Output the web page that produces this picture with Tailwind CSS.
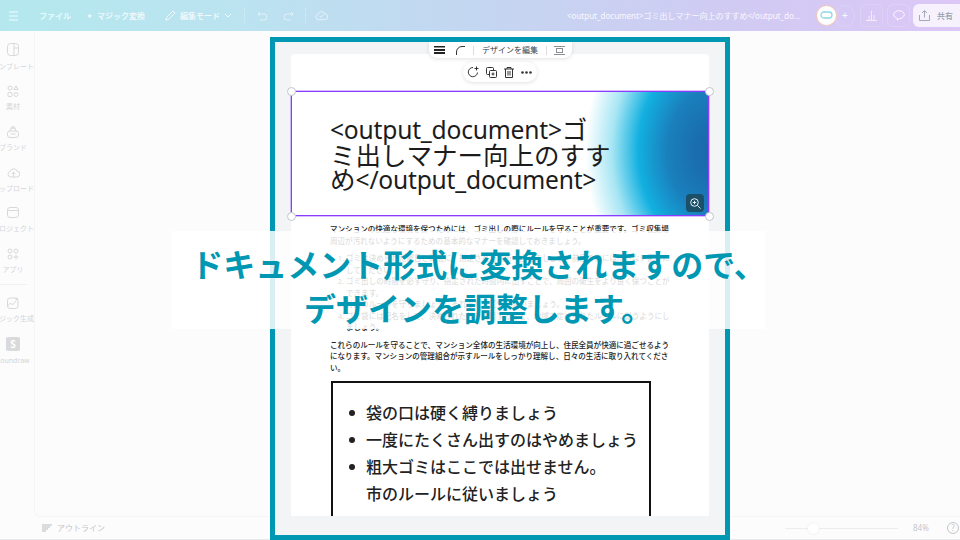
<!DOCTYPE html>
<html lang="ja"><head><meta charset="utf-8">
<script src="https://cdn.jsdelivr.net/npm/@tailwindcss/browser@4"></script>
</head>
<body class="w-[960px] h-[540px] overflow-hidden relative bg-[#fcfcfd] font-['Noto_Sans','Noto_Sans_CJK_JP',sans-serif]">
<div class="w-[960px] h-[540px] flex flex-col">
  <!-- top bar -->
  <header class="h-[31px] shrink-0 flex items-center whitespace-nowrap bg-[linear-gradient(90deg,#b4e8ee_0%,#bbe3f0_25%,#c4d6f1_50%,#d0cbf3_75%,#dcc7f6_100%)] text-white/85 text-[8px] font-medium">
    <svg class="ml-[9px] shrink-0 w-[9px] h-[10px]" viewBox="0 0 9 10" stroke="currentColor" stroke-width="1.1"><path d="M0 1h9M0 5h9M0 9h9"/></svg>
    <span class="ml-[21px] w-[32px]">ファイル</span>
    <span class="ml-[16px] w-[5px] text-[5px]">★</span>
    <span class="ml-[5px] w-[48px]">マジック変換</span>
    <svg class="ml-[20px] shrink-0 w-[11px] h-[11px]" viewBox="0 0 12 12" fill="none" stroke="currentColor" stroke-width="1"><path d="M1 11l.7-3L8.800 1l2.200 2.200L4 10.300z"/></svg>
    <span class="ml-[4px] w-[40px]">編集モード</span>
    <svg class="ml-[4px] shrink-0 w-[8px] h-[5px]" viewBox="0 0 8 5" fill="none" stroke="currentColor"><path d="M1 1l3 3 3-3"/></svg>
    <span class="ml-[12px] h-[16px] border-l border-dotted border-white/40"></span>
    <svg class="ml-[12px] shrink-0 w-[11px] h-[10px] text-white/50" viewBox="0 0 11 10" fill="none" stroke="currentColor"><path d="M3 1L1 3l2 2M1 3h6a3 3 0 010 6H3"/></svg>
    <svg class="ml-[15px] shrink-0 w-[11px] h-[10px] text-white/50" viewBox="0 0 11 10" fill="none" stroke="currentColor"><path d="M8 1l2 2-2 2M10 3H4a3 3 0 000 6h4"/></svg>
    <span class="ml-[11px] h-[16px] border-l border-dotted border-white/40"></span>
    <svg class="ml-[9px] shrink-0 w-[13px] h-[11px] text-white/60" viewBox="0 0 14 11" fill="none" stroke="currentColor"><path d="M3.500 10a2.800 2.800 0 01-.4-5.500A4 4 0 0110.800 4 3 3 0 0110.500 10z"/><path d="M5 6l1.500 1.500L9 4.500"/></svg>
    <span class="ml-auto w-[233px] font-normal text-white/85 overflow-hidden">&lt;output_document&gt;ゴミ出しマナー向上のすすめ&lt;/output_do...</span>
    <span class="relative z-10 ml-[16px] w-[21px] h-[21px] shrink-0 rounded-full bg-white border border-[#f5c5b5] flex items-center justify-center">
      <svg class="w-[13px] h-[9px]" viewBox="0 0 13 9" fill="none" stroke="#8fd6e6" stroke-width="1.300"><rect x="1" y="1" width="11" height="6" rx="3"/></svg>
    </span>
    <span class="-ml-[2px] w-[20px] h-[22px] shrink-0 rounded-full border border-white/15 flex items-center justify-center text-[11px] font-normal">+</span>
    <span class="ml-[5px] w-[23px] h-[23px] shrink-0 rounded-md border border-white/15 flex items-center justify-center">
      <svg class="w-[11px] h-[11px]" viewBox="0 0 11 11" fill="none" stroke="currentColor" stroke-width=".8"><path d="M0 10.500h11M3 10V6M5.500 10V1M8 10V5"/></svg>
    </span>
    <span class="ml-[4px] w-[23px] h-[23px] shrink-0 rounded-md border border-white/15 flex items-center justify-center">
      <svg class="w-[12px] h-[11px]" viewBox="0 0 12 11" fill="none" stroke="currentColor"><path d="M6 .7c3 0 5.300 1.800 5.300 4S9 8.700 6 8.700l-1.500 1.600V8.500C2.400 8 .7 6.600.7 4.700c0-2.200 2.300-4 5.300-4z"/></svg>
    </span>
    <span class="ml-[3px] w-[47px] h-[23px] shrink-0 rounded-l-md bg-white/75 flex items-center text-[#9aa0a8]">
      <svg class="ml-[6px] w-[11px] h-[11px]" viewBox="0 0 11 11" fill="none" stroke="currentColor" stroke-width=".9"><path d="M.5 5v5.500h10V5M5.500 7.500V.8M3 3l2.500-2.500L8 3"/></svg>
      <span class="ml-[7px]">共有</span>
    </span>
  </header>

  <!-- middle -->
  <div class="flex-1 flex min-h-0">
    <nav class="w-[26px] shrink-0 flex flex-col items-center pt-[12px] text-[7px] leading-[10px] text-[#d3d5d8] whitespace-nowrap">
      <svg class="w-[12px] h-[13px] shrink-0" viewBox="0 0 12 13" fill="none" stroke="#d6d8da"><rect x=".5" y=".5" width="11" height="12" rx="3"/><path d="M7 .5v12M7 5h4.500"/></svg>
      <span class="mt-[6px]">テンプレート</span>
      <svg class="mt-[13px] w-[12px] h-[12px] shrink-0" viewBox="0 0 12 12" fill="none" stroke="#d6d8da"><circle cx="3" cy="3" r="2"/><path d="M9 .8l2.200 3.800H6.800z"/><rect x="1" y="7.500" width="4" height="4" rx="1"/><circle cx="9" cy="9.500" r="2"/></svg>
      <span class="mt-[5px]">素材</span>
      <svg class="mt-[14px] w-[12px] h-[12px] shrink-0" viewBox="0 0 12 12" fill="none" stroke="#d6d8da"><rect x=".5" y="5" width="11" height="6.500" rx="2.500"/><path d="M3 5a3 3 0 016 0M3.500 8h5M4 2.500a2 2 0 014 0"/></svg>
      <span class="mt-[5px]">ブランド</span>
      <svg class="mt-[14px] w-[13px] h-[11px] shrink-0" viewBox="0 0 13 11" fill="none" stroke="#d6d8da"><path d="M3.500 10a2.800 2.800 0 01-.4-5.500A3.700 3.700 0 0110 4a3 3 0 01-.5 6H3.500zM6.500 10V5.500M4.700 7l1.800-1.800L8.300 7"/></svg>
      <span class="mt-[6px]">アップロード</span>
      <svg class="mt-[13px] w-[12px] h-[11px] shrink-0" viewBox="0 0 12 11" fill="none" stroke="#d6d8da"><rect x=".5" y=".5" width="11" height="10" rx="2.500"/><path d="M.5 3.500h11"/></svg>
      <span class="mt-[6px]">プロジェクト</span>
      <svg class="mt-[14px] w-[12px] h-[12px] shrink-0" viewBox="0 0 12 12" fill="none" stroke="#d6d8da"><circle cx="3" cy="3" r="2"/><circle cx="9" cy="3" r="2"/><circle cx="3" cy="9" r="2"/><path d="M9 6.500v5M6.500 9h5"/></svg>
      <span class="mt-[5px]">アプリ</span>
      <span class="mt-[9px] w-[28px] border-t border-[#f1f2f3]"></span>
      <svg class="mt-[12px] w-[12px] h-[12px] shrink-0" viewBox="0 0 12 12" fill="none" stroke="#d6d8da"><rect x=".5" y="1" width="10.500" height="10.500" rx="2.500"/><path d="M.5 9l3-3 2 2 3.500-4"/><circle cx="9.500" cy="2" r=".8" fill="#d6d8da"/></svg>
      <span class="mt-[5px]">マジック生成</span>
      <span class="mt-[13px] w-[14px] h-[14px] shrink-0 rounded-[2px] bg-[#d9dadb] text-white text-[10px] leading-[14px] font-bold text-center">S</span>
      <span class="mt-[5px]">Soundraw</span>
    </nav>
    <main class="flex-1 ml-[8px] rounded-bl-md border-l border-b border-[#f5f5f6]"></main>
  </div>

  <!-- bottom bar -->
  <footer class="h-[23px] shrink-0 flex items-center border-b border-[#e9eaeb] text-[#c4c6ca] text-[8px] whitespace-nowrap">
    <svg class="ml-[42px] shrink-0 w-[10px] h-[8px]" viewBox="0 0 10 8" stroke="#b9bbbf"><path d="M0 1h10M0 3h8M0 5h6M0 7h4"/></svg>
    <span class="ml-[5px] w-[47px]">アウトライン</span>
    <span class="ml-[681px] w-[113px] h-px bg-[#eceded] relative">
      <span class="absolute left-[23px] -top-[5px] w-[11px] h-[11px] rounded-full bg-white shadow-[0_0_2px_#e3e4e5]"></span>
    </span>
    <span class="ml-[15px] w-[16px]">84%</span>
    <span class="ml-[18px] w-[12px] h-[12px] rounded-full border border-[#c4c6ca] leading-[10px] text-center">?</span>
  </footer>
</div>

<!-- teal highlighted canvas -->
<section class="absolute left-[270px] top-[37px] w-[460px] h-[503px] border-[5px] border-[#0097b2] bg-[#f3f4f6] overflow-hidden">
  <div class="absolute left-[16px] top-[12px] w-[418px] h-[462px] rounded-t bg-white overflow-hidden">
    <div class="mt-[37px] h-[125px] bg-[radial-gradient(ellipse_132px_170px_at_102%_48%,#1a66a8_0%,#1a6fb0_18%,#1a80bd_38%,#12b0e0_60%,#a8e6f4_80%,#ffffff_100%)] pl-[39px] pt-[26px] text-[25.5px] leading-[24.600px] text-[#1c1c1c] w-[418px] whitespace-nowrap">
      <p><span class="text-[24.600px] tracking-[-0.2px]">&lt;output_document&gt;</span>ゴ<br>ミ出しマナー向上のすす<br>め<span class="text-[24.600px] tracking-[-0.2px]">&lt;/output_document&gt;</span></p>
    </div>
    <div class="pl-[39px] pr-[37px] pt-[8px] text-[7.55px] leading-[11.5px] text-[#222] font-medium">
      <p>マンションの快適な環境を保つためには、ゴミ出しの際にルールを守ることが重要です。ゴミ収集場周辺が汚れないようにするための基本的なマナーを確認しておきましょう。</p>
      <ol class="mt-[6px] pl-[16px] list-decimal">
        <li>ゴミは決められた曜日と時間に、指定された場所へ出しましょう。前日の夜には出さないようにしてください。</li>
        <li>ゴミ出しの時間を必ず守り、指定された時間内に出すことで、周囲の衛生をより良く保つことができます。</li>
        <li>分別のルールを守りましょう。それぞれの区分に従いましょう。</li>
        <li>ゴミ袋には記名をして、決められた袋を使用するなど、地域で定められたルールに従うようにしましょう。</li>
      </ol>
      <p class="mt-[6px]">これらのルールを守ることで、マンション全体の生活環境が向上し、住民全員が快適に過ごせるようになります。マンションの管理組合が示すルールをしっかり理解し、日々の生活に取り入れてください。</p>
    </div>
    <div class="ml-[40px] mt-[7px] w-[320px] h-[160px] border-2 border-[#111] pl-[33px] pt-[17px] text-[16px] leading-[27px] font-medium text-[#222] whitespace-nowrap">
      <p class="relative"><span class="absolute -left-[17px] top-[10px] w-[6px] h-[6px] rounded-full bg-[#222]"></span>袋の口は硬く縛りましょう</p>
      <p class="relative"><span class="absolute -left-[17px] top-[10px] w-[6px] h-[6px] rounded-full bg-[#222]"></span>一度にたくさん出すのはやめましょう</p>
      <p class="relative"><span class="absolute -left-[17px] top-[10px] w-[6px] h-[6px] rounded-full bg-[#222]"></span>粗大ゴミはここでは出せません。</p>
      <p>市のルールに従いましょう</p>
    </div>
  </div>
  <!-- selection -->
  <div class="absolute left-[16px] top-[49px] w-[418px] h-[125px] border border-[#8b3dff] shadow-[0_0_0_1px_#8b3dff55]"></div>
  <span class="absolute left-[12px] top-[45px] w-[9px] h-[9px] rounded-full bg-white border border-[#c4c6ca]"></span>
  <span class="absolute left-[430px] top-[45px] w-[9px] h-[9px] rounded-full bg-white border border-[#c4c6ca]"></span>
  <span class="absolute left-[12px] top-[170px] w-[9px] h-[9px] rounded-full bg-white border border-[#c4c6ca]"></span>
  <span class="absolute left-[430px] top-[170px] w-[9px] h-[9px] rounded-full bg-white border border-[#c4c6ca]"></span>
  <span class="absolute left-[411px] top-[152px] w-[18px] h-[18px] rounded-[4px] bg-[#1c4f68] flex items-center justify-center">
    <svg class="w-[11px] h-[11px]" viewBox="0 0 11 11" fill="none" stroke="#e8f0f3"><circle cx="4.500" cy="4.500" r="3.800"/><path d="M7.500 7.500l3 3M4.500 2.800v3.400M2.800 4.500h3.400"/></svg>
  </span>
  <!-- toolbars -->
  <div class="absolute left-[154px] top-0 w-[143px] h-[16px] rounded-b-lg bg-white shadow-[0_1px_4px_rgba(0,0,0,0.12)] flex items-center text-[8px] text-[#3c4043] whitespace-nowrap">
    <svg class="ml-[5px] w-[11px] h-[8px]" viewBox="0 0 11 8" fill="#222"><rect width="11" height="1.500"/><rect y="3" width="11" height="2"/><rect y="6" width="11" height="2"/></svg>
    <svg class="ml-[11px] w-[9px] h-[9px]" viewBox="0 0 9 9" fill="none" stroke="#333"><path d="M.5 9V6A5.500 5.500 0 016 .5h3"/></svg>
    <span class="ml-[8px] h-[9px] border-l border-[#ddd]"></span>
    <span class="ml-[8px]">デザインを編集</span>
    <span class="ml-[8px] h-[9px] border-l border-[#ddd]"></span>
    <svg class="ml-[7px] w-[11px] h-[9px]" viewBox="0 0 11 9" fill="none" stroke="#8a8d91"><path d="M0 .5h11M0 8.500h11"/><rect x="2.500" y="2.500" width="6" height="4"/></svg>
  </div>
  <div class="absolute left-[188px] top-[20px] w-[74px] h-[20px] rounded-full bg-white shadow-[0_1px_4px_rgba(0,0,0,0.12)] flex items-center pl-[4px] gap-[7px]">
    <svg class="w-[12px] h-[12px]" viewBox="0 0 12 12" fill="none" stroke="#333"><path d="M10.500 6.500A4.600 4.600 0 116 1.500M9.500 .5v4M7.500 2.500h4"/></svg>
    <svg class="w-[11px] h-[11px]" viewBox="0 0 11 11" fill="none" stroke="#333"><rect x=".5" y=".5" width="7" height="7" rx="1"/><rect x="3.500" y="3.500" width="7" height="7" rx="1" fill="#fff"/><path d="M7 5.500v3M5.500 7h3"/></svg>
    <svg class="w-[10px] h-[11px]" viewBox="0 0 10 11" fill="none" stroke="#333"><path d="M0 2h10M3 2V.5h4V2M1.500 2v8.500h7V2M4 4v4.500M6 4v4.500"/></svg>
    <svg class="w-[11px] h-[3px]" viewBox="0 0 11 3" fill="#333"><circle cx="1.500" cy="1.500" r="1.300"/><circle cx="5.500" cy="1.500" r="1.300"/><circle cx="9.500" cy="1.500" r="1.300"/></svg>
  </div>
</section>

<!-- caption -->
<div class="absolute left-[172px] top-[231px] w-[593px] h-[98px] bg-white/85 pt-[10px] pl-[20px] flex flex-col items-center justify-center text-[#0097b2] text-[32px] leading-[44px] font-bold font-['Noto_Sans_CJK_JP',sans-serif] whitespace-nowrap">
  <p>ドキュメント形式に変換されますので、</p>
  <p>デザインを調整します。</p>
</div>
</body></html>
